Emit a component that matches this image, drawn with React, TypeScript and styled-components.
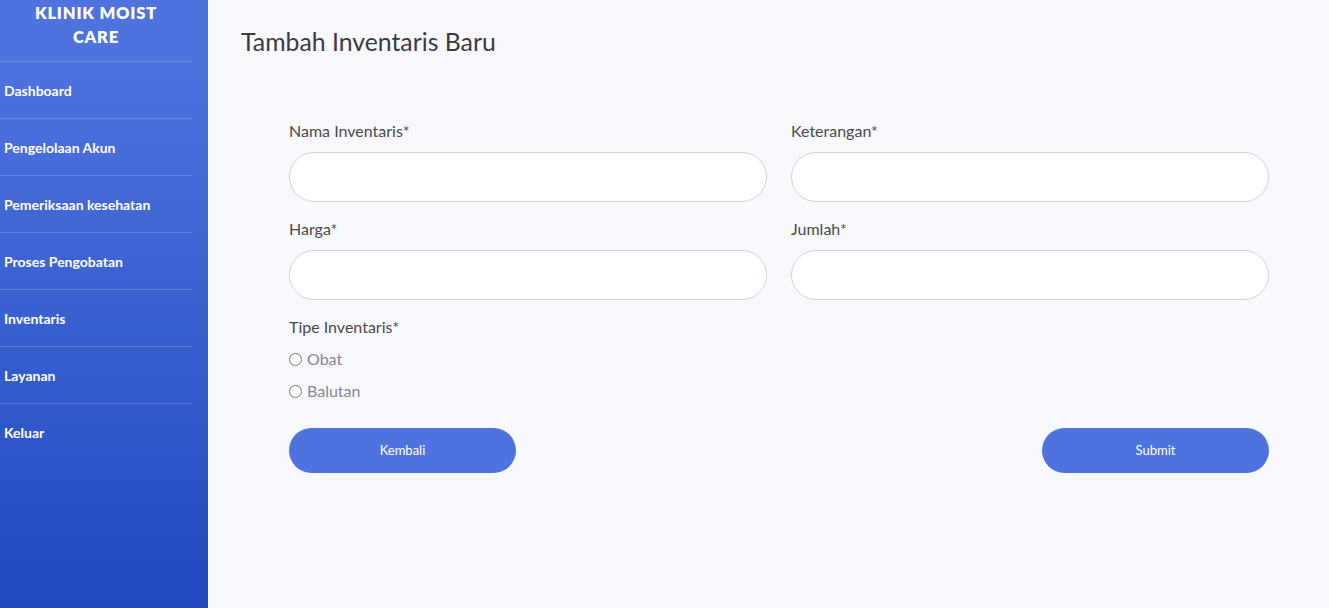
import styled, { createGlobalStyle } from "styled-components";

const NAVS = [
  "Dashboard",
  "Pengelolaan Akun",
  "Pemeriksaan kesehatan",
  "Proses Pengobatan",
  "Inventaris",
  "Layanan",
  "Keluar",
];

const GlobalStyle = createGlobalStyle`
  html, body {
    margin: 0;
    padding: 0;
    height: 100%;
  }
  body {
    font-family: Lato, "Open Sans", sans-serif;
    background: #f8f9fc;
  }
  #root {
    height: 100%;
  }
`;

const Layout = styled.div`
  display: flex;
  height: 608px;
`;

const Sidebar = styled.nav`
  width: 208px;
  flex-shrink: 0;
  background: linear-gradient(180deg, #4e73df 10%, #224abe 100%);
  display: flex;
  flex-direction: column;
`;

const Brand = styled.div`
  width: 192px;
  height: 62px;
  box-sizing: border-box;
  padding-top: 1px;
  text-align: center;
  color: #fff;
  font-weight: 800;
  font-size: 16.5px;
  line-height: 24px;
  letter-spacing: 0.8px;
  text-transform: uppercase;
  border-bottom: 1px solid rgba(255, 255, 255, 0.18);
`;

const NavItem = styled.a<{ $last?: boolean }>`
  width: 192px;
  height: 57px;
  box-sizing: border-box;
  display: flex;
  align-items: center;
  padding-left: 4px;
  color: #fff;
  font-size: 14px;
  font-weight: 700;
  text-decoration: none;
  border-bottom: ${(p) => (p.$last ? "none" : "1px solid rgba(255, 255, 255, 0.18)")};
`;

const Main = styled.main`
  flex: 1;
  padding: 27px 60px 0 33px;
`;

const Title = styled.h1`
  margin: 0;
  font-size: 24.8px;
  line-height: 29px;
  font-weight: 400;
  color: #3a3b45;
`;

const Form = styled.form`
  margin: 63px 0 0 48px;
`;

const Grid = styled.div`
  display: grid;
  grid-template-columns: 1fr 1fr;
  column-gap: 24px;
  row-gap: 15px;
`;

const Field = styled.div`
  display: flex;
  flex-direction: column;
`;

const Label = styled.label`
  font-size: 16px;
  line-height: 24px;
  color: #4a4a4a;
  margin-bottom: 9px;
`;

const Input = styled.input`
  height: 50px;
  box-sizing: border-box;
  border: 1px solid #d1d3e2;
  border-radius: 25px;
  background: #fff;
  padding: 0 20px;
  font-size: 16px;
  font-family: inherit;
  outline: none;
`;

const TypeBlock = styled.div`
  margin-top: 15px;
  display: flex;
  flex-direction: column;
  gap: 8px;
`;

const TypeLabel = styled.div`
  font-size: 16px;
  line-height: 24px;
  color: #4a4a4a;
`;

const RadioRow = styled.label`
  display: flex;
  align-items: center;
  gap: 5px;
  font-size: 16px;
  line-height: 24px;
  color: #858796;
  input {
    margin: 0;
    width: 13px;
    height: 13px;
  }
`;

const Actions = styled.div`
  margin-top: 25px;
  display: flex;
  justify-content: space-between;
`;

const Button = styled.button`
  width: 227px;
  height: 45px;
  padding: 0 0 2px;
  border: none;
  border-radius: 23px;
  background: #4e73df;
  color: #fff;
  font-family: inherit;
  font-size: 13px;
  cursor: pointer;
`;

export default function App() {
  return (
    <>
      <GlobalStyle />
      <Layout>
        <Sidebar>
          <Brand>
            Klinik Moist
            <br />
            Care
          </Brand>
          {NAVS.map((label, i) => (
            <NavItem key={label} href="#" $last={i === NAVS.length - 1}>
              {label}
            </NavItem>
          ))}
        </Sidebar>
        <Main>
          <Title>Tambah Inventaris Baru</Title>
          <Form onSubmit={(e) => e.preventDefault()}>
            <Grid>
              <Field>
                <Label>Nama Inventaris*</Label>
                <Input />
              </Field>
              <Field>
                <Label>Keterangan*</Label>
                <Input />
              </Field>
              <Field>
                <Label>Harga*</Label>
                <Input />
              </Field>
              <Field>
                <Label>Jumlah*</Label>
                <Input />
              </Field>
            </Grid>
            <TypeBlock>
              <TypeLabel>Tipe Inventaris*</TypeLabel>
              <RadioRow>
                <input type="radio" name="tipe" /> Obat
              </RadioRow>
              <RadioRow>
                <input type="radio" name="tipe" /> Balutan
              </RadioRow>
            </TypeBlock>
            <Actions>
              <Button type="button">Kembali</Button>
              <Button type="submit">Submit</Button>
            </Actions>
          </Form>
        </Main>
      </Layout>
    </>
  );
}
